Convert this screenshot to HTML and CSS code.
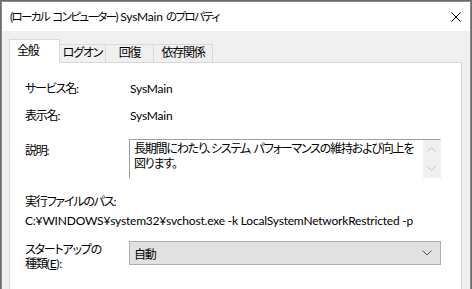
FILE: index.html
```html
<!DOCTYPE html>
<html lang="ja">
<head>
    <meta charset="UTF-8">
    <title>SysMain のプロパティ</title>
    <link rel="stylesheet" href="styles.css">
</head>
<body>
    <div class="window">
        <div class="titlebar">
            <span class="title">(ローカル コンピューター) <span class="en">SysMain</span> のプロパティ</span>
            <span class="close">
                <svg width="10" height="10" viewBox="0 0 10 10"><path d="M0.5 0.5L9.5 9.5M9.5 0.5L0.5 9.5" stroke="#000" stroke-width="1"/></svg>
            </span>
        </div>
        <div class="client">
            <div class="tabs">
                <div class="tab active">全般</div>
                <div class="tab t2">ログオン</div>
                <div class="tab t3">回復</div>
                <div class="tab t4">依存関係</div>
            </div>
            <div class="panel">
                <div class="row r1">
                    <div class="label">サービス名<span class="en">:</span></div>
                    <div class="value en">SysMain</div>
                </div>
                <div class="row r2">
                    <div class="label">表示名<span class="en">:</span></div>
                    <div class="value en">SysMain</div>
                </div>
                <div class="row r3">
                    <div class="label desc-label">説明<span class="en">:</span></div>
                    <div class="desc">
                        <div class="desc-text">長期間にわたり、システム パフォーマンスの維持および向上を<br>図ります。</div>
                        <div class="scroll">
                            <svg width="9" height="5" viewBox="0 0 9 5"><path d="M0.5 4.5L4.5 0.5L8.5 4.5" fill="none" stroke="#c2c2c2"/></svg>
                            <svg width="9" height="5" viewBox="0 0 9 5"><path d="M0.5 0.5L4.5 4.5L8.5 0.5" fill="none" stroke="#c2c2c2"/></svg>
                        </div>
                    </div>
                </div>
                <div class="path-label">実行ファイルのパス<span class="en">:</span></div>
                <div class="path en">C:¥WINDOWS¥system32¥svchost.exe -k LocalSystemNetworkRestricted -p</div>
                <div class="row r4">
                    <div class="label startup-label">スタートアップの<br>種類<span class="en">(<u>E</u>):</span></div>
                    <div class="select">
                        <span>自動</span>
                        <svg width="10" height="6" viewBox="0 0 10 6"><path d="M0.5 0.5L5 5L9.5 0.5" fill="none" stroke="#555"/></svg>
                    </div>
                </div>
            </div>
        </div>
    </div>
</body>
</html>
```

FILE: styles.css
```css
body {
    margin: 0;
    padding: 0;
    background-color: #6b6b6b;
    font-family: Lato, "Noto Sans CJK JP", sans-serif;
    font-feature-settings: "palt";
    font-size: 12px;
    letter-spacing: -1.2px;
    color: #000;
    height: 289px;
    overflow: hidden;
}

.en {
    letter-spacing: -0.2px;
}

.window {
    margin: 1px 1px 0 1px;
    border: 1px solid #8a8a8a;
    border-bottom: none;
    height: 288px;
    box-sizing: border-box;
    background-color: #f0f0f0;
    overflow: hidden;
}

.titlebar {
    display: flex;
    justify-content: space-between;
    align-items: center;
    height: 29px;
    background-color: #fff;
    padding: 0 8px 0 8px;
}

.title {
    font-size: 11.5px;
    letter-spacing: -1.6px;
    word-spacing: 2px;
    line-height: 16px;
    margin-top: 1px;
}

.title .en {
    font-size: 12px;
    letter-spacing: -0.2px;
}

.close {
    display: flex;
    margin-right: 1px;
}

.client {
    padding: 8px 8px 0 7px;
}

.tabs {
    display: flex;
    align-items: flex-end;
    height: 23px;
}

.tab {
    box-sizing: border-box;
    height: 18px;
    line-height: 16px;
    text-align: center;
    white-space: nowrap;
    border: 1px solid #d9d9d9;
    border-left: none;
    border-bottom: none;
}

.tab.active {
    height: 24px;
    line-height: 22px;
    width: 51px;
    background-color: #fff;
    border-left: 1px solid #d9d9d9;
    margin-bottom: -1px;
    position: relative;
    z-index: 1;
    text-align: left;
    padding-left: 7px;
}

.t2 { width: 46px; }
.t3 { width: 48px; }
.t4 { width: 59px; }

.panel {
    background-color: #fff;
    border: 1px solid #d9d9d9;
    height: 240px;
    padding: 0 20px 0 15px;
}

.row {
    display: flex;
}

.label {
    width: 104px;
    flex-shrink: 0;
    line-height: 16px;
    white-space: nowrap;
}

.value {
    line-height: 16px;
    padding-left: 1px;
}

.r1 { margin-top: 18px; }
.r2 { margin-top: 11px; }
.r3 { margin-top: 15px; }

.desc-label {
    padding-top: 4px;
}

.desc {
    display: flex;
    width: 312px;
    height: 40px;
    box-sizing: border-box;
    border: 1px solid;
    border-color: #a0a0a0 #f0f0f0 #ffffff #a0a0a0;
}

.desc-text {
    flex: 1;
    padding: 1px 4px 0 4px;
    line-height: 15px;
    white-space: nowrap;
    overflow: hidden;
    word-spacing: 2px;
}

.scroll {
    width: 17px;
    background-color: #f0f0f0;
    display: flex;
    flex-direction: column;
    align-items: center;
    justify-content: space-between;
    padding: 7px 0 7px 0;
}

.path-label {
    margin-top: 15px;
    line-height: 16px;
}

.path {
    margin-top: 3px;
    line-height: 16px;
    white-space: nowrap;
}

.r4 {
    margin-top: 12px;
}

.startup-label {
    line-height: 14px;
    padding-top: 2px;
}

.select {
    display: flex;
    justify-content: space-between;
    align-items: center;
    box-sizing: border-box;
    width: 312px;
    height: 24px;
    background-color: #e1e1e1;
    border: 1px solid #adadad;
    padding: 0 8px 0 4px;
}
```
